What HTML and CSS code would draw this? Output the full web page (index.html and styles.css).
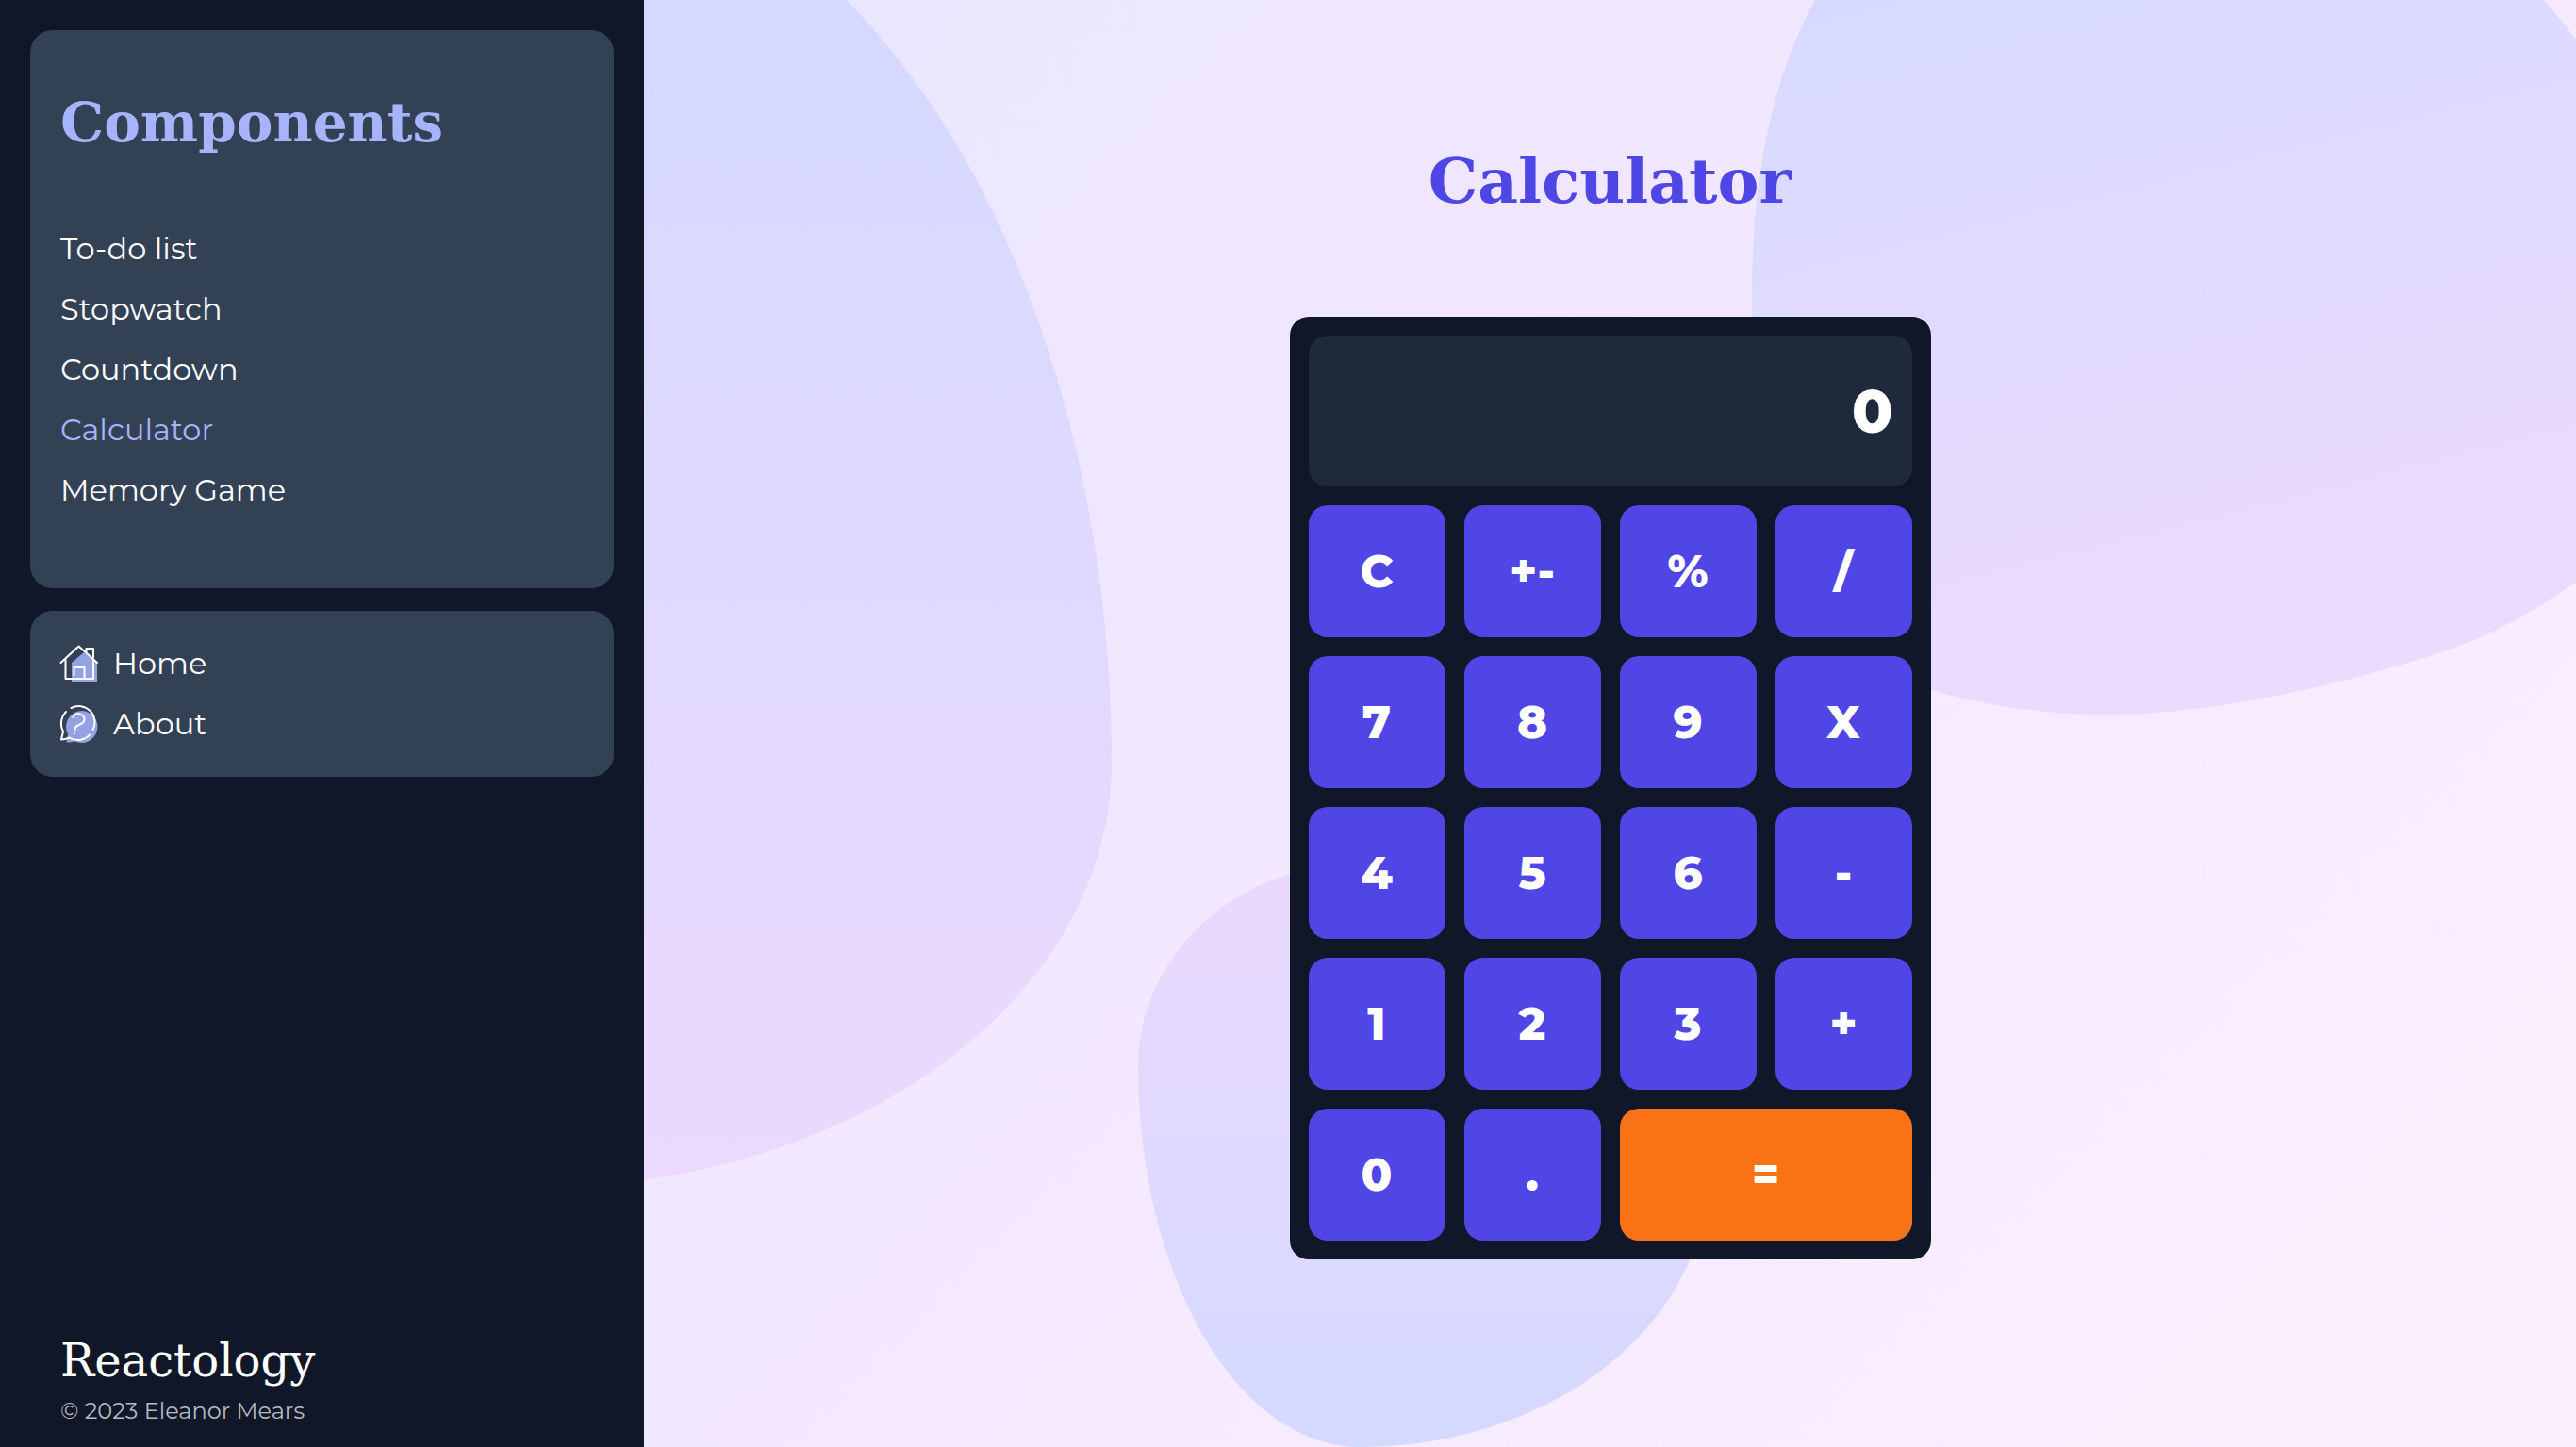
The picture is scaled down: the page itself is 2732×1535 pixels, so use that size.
FILE: index.html
```html
<!DOCTYPE html>
<html lang="en">
<head>
  <meta charset="utf-8">
  <meta name="viewport" content="width=device-width, initial-scale=1">
  <title>Calculator | Reactology</title>
  <link rel="stylesheet" href="styles.css">
</head>
<body>
  <div class="layout">
    <aside class="sidebar">
      <nav class="card" aria-label="Components">
        <h2 class="card-title">Components</h2>
        <ul class="nav-list nav-components">
          <li><a class="nav-link" href="#todo">To-do list</a></li>
          <li><a class="nav-link" href="#stopwatch">Stopwatch</a></li>
          <li><a class="nav-link" href="#countdown">Countdown</a></li>
          <li><a class="nav-link active" href="#calculator" aria-current="page">Calculator</a></li>
          <li><a class="nav-link" href="#memory">Memory Game</a></li>
        </ul>
      </nav>
      <nav class="card" aria-label="Site">
        <ul class="nav-list">
          <li>
            <a class="nav-link" href="#home">
              <svg class="icon" viewBox="0 0 40 40" aria-hidden="true">
                <path class="icon-fill" d="M12 19 25 8l14 12v20H12z"/>
                <path class="icon-line" d="M.5 19 19.500 1.500 39 19M5.500 15.500V36H35V15.500M27.500 8V4H35v9.500M14.500 32.500V24H25.500V36"/>
              </svg>
              Home
            </a>
          </li>
          <li>
            <a class="nav-link" href="#about">
              <svg class="icon" viewBox="0 0 40 40" aria-hidden="true">
                <path class="icon-fill" d="M23 6a17 17 0 1 1-8 32.300Q11 40 6.500 39.500L8 31A17 17 0 0 1 23 6z"/>
                <path class="icon-line" d="M11.500 3A17 17 0 0 1 34.500 26M31 31.500A17 17 0 0 1 9.500 34.500Q5 36.500 1 36.500L3 28A18 18 0 0 1 6 7M13.500 13C14 7.500 25.500 7.500 25.500 15.500C25.500 21.500 15.500 19.500 15.500 26M14.700 29.600v.6"/>
              </svg>
              About
            </a>
          </li>
        </ul>
      </nav>
      <footer class="footer">
        <p class="brand">Reactology</p>
        <p class="copyright">© 2023 Eleanor Mears</p>
      </footer>
    </aside>

    <main class="main">
      <svg class="blobs" viewBox="0 0 2049 1535" preserveAspectRatio="none" aria-hidden="true">
        <defs>
          <linearGradient id="fade-down" x1="0" y1="0" x2="0" y2="1250" gradientUnits="userSpaceOnUse">
            <stop offset="0" stop-color="#d5d9ff"/>
            <stop offset="1" stop-color="#ebd9ff"/>
          </linearGradient>
          <linearGradient id="fade-up" x1="0" y1="1535" x2="0" y2="916" gradientUnits="userSpaceOnUse">
            <stop offset="0" stop-color="#d4d9ff"/>
            <stop offset="1" stop-color="#ebd9ff"/>
          </linearGradient>
          <linearGradient id="fade-tilt" x1="1400" y1="-60" x2="1600" y2="740" gradientUnits="userSpaceOnUse">
            <stop offset="0" stop-color="#d6daff"/>
            <stop offset="1" stop-color="#eddaff"/>
          </linearGradient>
        </defs>
        <path fill="url(#fade-down)" d="M-112-150A608 960 0 0 1 496 810A608 449 0 0 1-112 1259z"/>
        <path fill="url(#fade-up)" d="M759 916A369 319 0 0 1 1128 1245A369 290 0 0 1 759 1535A235 404 0 0 1 524 1131A235 215 0 0 1 759 916z"/>
        <path fill="url(#fade-tilt)" d="M1242 0C1200 75 1175 180 1175 310C1175 540 1240 705 1365 732C1420 748 1485 758 1550 758C1695 758 1850 710 1900 694C1950 678 2000 653 2049 617V42Q2033 20 2015 0z"/>
      </svg>

      <h1 class="title">Calculator</h1>

      <section class="calculator" aria-label="Calculator">
        <output class="display">0</output>
        <button class="key" type="button">C</button>
        <button class="key" type="button">+-</button>
        <button class="key" type="button">%</button>
        <button class="key" type="button">/</button>
        <button class="key" type="button">7</button>
        <button class="key" type="button">8</button>
        <button class="key" type="button">9</button>
        <button class="key" type="button">X</button>
        <button class="key" type="button">4</button>
        <button class="key" type="button">5</button>
        <button class="key" type="button">6</button>
        <button class="key" type="button">-</button>
        <button class="key" type="button">1</button>
        <button class="key" type="button">2</button>
        <button class="key" type="button">3</button>
        <button class="key" type="button">+</button>
        <button class="key" type="button">0</button>
        <button class="key" type="button">.</button>
        <button class="key key-equals" type="button">=</button>
      </section>
    </main>
  </div>
</body>
</html>
```
FILE: styles.css
```css
* {
  box-sizing: border-box;
  margin: 0;
  padding: 0;
}

body {
  font-family: Montserrat, Inter, sans-serif;
  font-size: 32px;
  line-height: 40px;
  color: #fff;
}

.layout {
  display: grid;
  grid-template-columns: 1fr 3fr;
  min-height: 100vh;
  background: linear-gradient(135deg, #e5e4ff, #f2e8ff 50%, #fdefff);
}

/* Sidebar */

.sidebar {
  display: flex;
  flex-direction: column;
  gap: 24px;
  padding: 32px 32px 22px;
  background: #101729;
}

.card {
  padding: 24px 32px;
  border-radius: 24px;
  background: #334155;
}

.card-title {
  padding: 38px 0 66px;
  font-family: "Special Elite", "DejaVu Serif", serif;
  font-size: 58px;
  line-height: 72px;
  color: #a5b4fc;
}

.nav-list {
  list-style: none;
}

.nav-components {
  padding-bottom: 48px;
}

.nav-link {
  display: flex;
  align-items: center;
  gap: 16px;
  height: 64px;
  color: #fff;
  text-decoration: none;
}

.nav-link.active {
  color: #a5b4fc;
}

.icon {
  width: 40px;
  height: 40px;
  overflow: visible;
}

.icon-fill {
  fill: #92a2e2;
}

.icon-line {
  fill: none;
  stroke: #fff;
  stroke-width: 2;
  stroke-linecap: round;
  stroke-linejoin: round;
}

.footer {
  margin-top: auto;
  padding: 0 32px;
}

.brand {
  padding-bottom: 6px;
  font-family: "Special Elite", "DejaVu Serif", serif;
  font-size: 48px;
  line-height: 64px;
}

.copyright {
  font-size: 24px;
  line-height: 32px;
  color: #b7b9bf;
}

/* Main area */

.main {
  position: relative;
  display: flex;
  flex-direction: column;
  align-items: center;
  gap: 96px;
  padding: 144px 32px;
}

.blobs {
  position: absolute;
  inset: 0;
  width: 100%;
  height: 100%;
}

.title {
  position: relative;
  font-family: "Special Elite", "DejaVu Serif", serif;
  font-size: 66px;
  line-height: 96px;
  color: #4f46e5;
}

.calculator {
  position: relative;
  display: grid;
  grid-template-columns: repeat(4, 1fr);
  gap: 20px;
  width: 100%;
  max-width: 680px;
  padding: 20px;
  border-radius: 20px;
  background: #101729;
}

.display {
  grid-column: 1 / -1;
  display: flex;
  align-items: center;
  justify-content: flex-end;
  height: 160px;
  padding: 0 20px;
  border-radius: 20px;
  background: #1e293b;
  font-size: 64px;
  font-weight: 800;
}

.key {
  height: 140px;
  border: 0;
  border-radius: 20px;
  background: #4f46e5;
  color: #fff;
  font: inherit;
  font-size: 48px;
  font-weight: 800;
  cursor: pointer;
}

.key-equals {
  grid-column: span 2;
  background: #f97316;
}
```
